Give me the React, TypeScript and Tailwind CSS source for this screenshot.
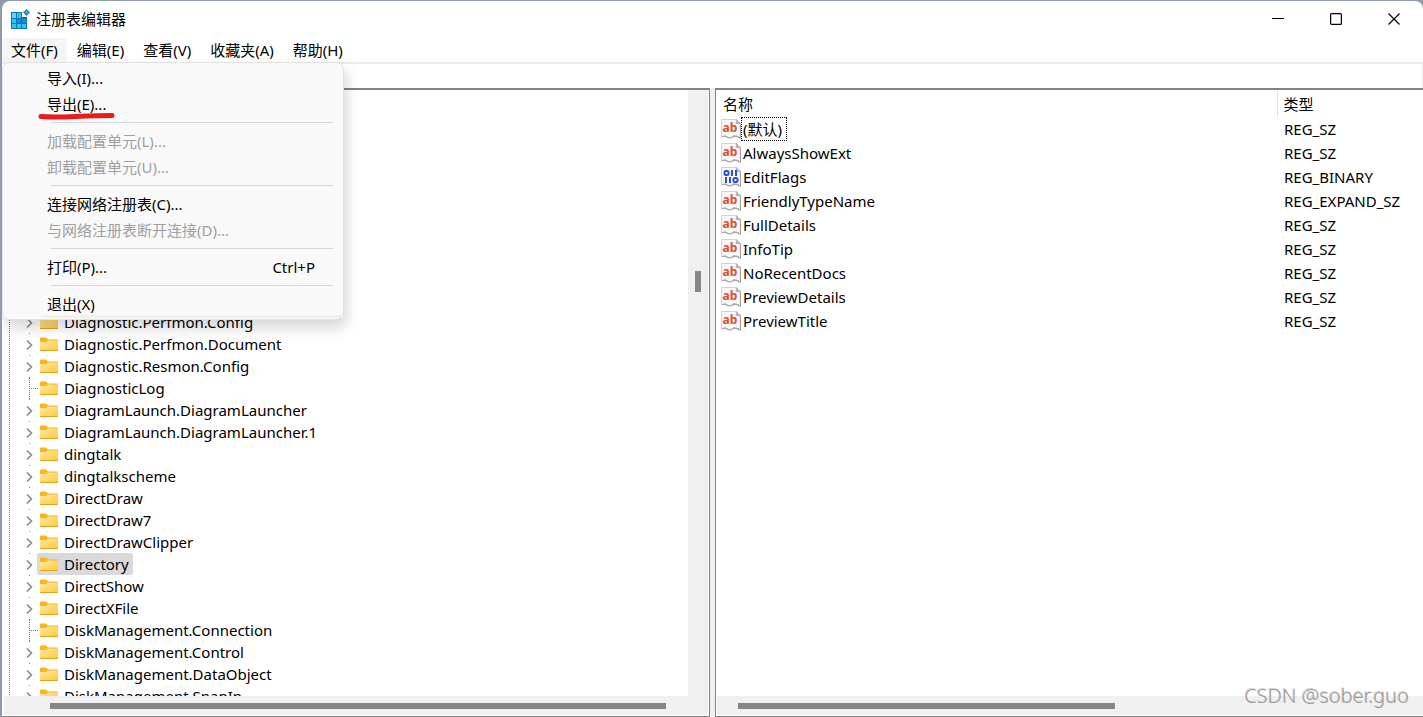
import type { ReactNode } from "react";

const menus = ["文件(F)", "编辑(E)", "查看(V)", "收藏夹(A)", "帮助(H)"];

type MenuEntry = { label: string; shortcut?: string; disabled?: boolean; marked?: boolean; last?: boolean };

const fileMenu: MenuEntry[][] = [
  [{ label: "导入(I)..." }, { label: "导出(E)...", marked: true }],
  [
    { label: "加载配置单元(L)...", disabled: true },
    { label: "卸载配置单元(U)...", disabled: true },
  ],
  [{ label: "连接网络注册表(C)..." }, { label: "与网络注册表断开连接(D)...", disabled: true }],
  [{ label: "打印(P)...", shortcut: "Ctrl+P" }],
  [{ label: "退出(X)", last: true }],
];

const keys: { name: string; leaf?: boolean; selected?: boolean }[] = [
  { name: "Diagnostic.Perfmon.Config" },
  { name: "Diagnostic.Perfmon.Document" },
  { name: "Diagnostic.Resmon.Config" },
  { name: "DiagnosticLog", leaf: true },
  { name: "DiagramLaunch.DiagramLauncher" },
  { name: "DiagramLaunch.DiagramLauncher.1" },
  { name: "dingtalk" },
  { name: "dingtalkscheme" },
  { name: "DirectDraw" },
  { name: "DirectDraw7" },
  { name: "DirectDrawClipper" },
  { name: "Directory", selected: true },
  { name: "DirectShow" },
  { name: "DirectXFile" },
  { name: "DiskManagement.Connection", leaf: true },
  { name: "DiskManagement.Control" },
  { name: "DiskManagement.DataObject" },
  { name: "DiskManagement.SnapIn" },
];

const values = [
  { name: "(默认)", type: "REG_SZ" },
  { name: "AlwaysShowExt", type: "REG_SZ" },
  { name: "EditFlags", type: "REG_BINARY" },
  { name: "FriendlyTypeName", type: "REG_EXPAND_SZ" },
  { name: "FullDetails", type: "REG_SZ" },
  { name: "InfoTip", type: "REG_SZ" },
  { name: "NoRecentDocs", type: "REG_SZ" },
  { name: "PreviewDetails", type: "REG_SZ" },
  { name: "PreviewTitle", type: "REG_SZ" },
];

function RegeditIcon() {
  return (
    <svg width="20" height="20" viewBox="0 0 20 20">
      <rect x="1" y="3" width="16" height="17" fill="#0b77b5" />
      <rect x="2" y="4" width="4" height="5" fill="#5fd4f8" />
      <rect x="7" y="4" width="4" height="5" fill="#35c1f1" />
      <rect x="2" y="10" width="4" height="4" fill="#35c1f1" />
      <rect x="7" y="10" width="4" height="4" fill="#1490cf" />
      <rect x="12" y="10" width="4" height="4" fill="#1490cf" />
      <rect x="2" y="15" width="4" height="4" fill="#35c1f1" />
      <rect x="7" y="15" width="4" height="4" fill="#35c1f1" />
      <rect x="12" y="15" width="4" height="4" fill="#35c1f1" />
      <path d="M12 2h6v6h-6z" fill="#fff" />
      <path d="M16.500 0L20 3.500 16.500 7 13 3.500z" fill="#2b86b5" />
      <path d="M16.500 2L18 3.500 16.500 5 15 3.500z" fill="#43b3df" />
    </svg>
  );
}

function FolderIcon() {
  return (
    <svg width="18" height="15" viewBox="0 0 18 15" className="shrink-0">
      <defs>
        <linearGradient id="folder" x1="0" y1="0" x2="1" y2="1">
          <stop offset="0" stopColor="#ffe9a6" />
          <stop offset="1" stopColor="#ffc83a" />
        </linearGradient>
      </defs>
      <path d="M0 1.500Q0 0.500 1 0.500h5l2 2h9q1 0 1 1V6H0z" fill="#f8b51c" />
      <path d="M0 5h6l2-1.500h10V13.500H0z" fill="url(#folder)" />
      <path d="M0 13h18v0.500q0 0.500-.5.500H.5Q0 14 0 13.500z" fill="#e5a21b" />
    </svg>
  );
}

function ValueIcon({ binary }: { binary: boolean }) {
  return (
    <svg width="20" height="20" viewBox="0 0 20 20" className="shrink-0">
      <path d="M.5.500H15.500L19.500 4.500V19L16 17.500 13 17Q10 20 7.500 18.500L4 17 .5 18z" fill="#f7f7f7" stroke="#d2d2d2" />
      <path d="M15.500.500V4.500H19.500V19L16 17.500" fill="none" stroke="#a0a0a0" strokeWidth="1.200" />
      <path d="M15 0l5 5h-5z" fill="#b5b5b5" />
      <path d="M1 18L4 17Q8 19.500 10.500 18.500L13 17 16 17.500 19 19" fill="none" stroke="#a6a6a6" strokeWidth="1.300" />
      {binary ? (
        <g fill="none" stroke="#2f4fd8" strokeWidth="2">
          <rect x="3.500" y="4" width="4" height="4" rx="1.500" />
          <path d="M11 3v6M15 3v6M5 10v6M9 10v6" />
          <rect x="12.500" y="11" width="4" height="4" rx="1.500" />
        </g>
      ) : (
        <text x="9" y="13" textAnchor="middle" fontSize="12" fontWeight="700" fill="#d94f2b" fontFamily="Open Sans, sans-serif">
          ab
        </text>
      )}
    </svg>
  );
}

function CaptionButton({ label, children }: { label: string; children: ReactNode }) {
  return (
    <button aria-label={label} className="flex h-full w-[58px] items-center justify-center">
      <svg width="12" height="12" viewBox="0 0 12 12" fill="none" stroke="#000" strokeWidth="1.200">
        {children}
      </svg>
    </button>
  );
}

function FileMenu() {
  return (
    <div className="absolute top-[61px] left-0 z-20 w-[342px] rounded-lg border border-[#e2e2e2] bg-[#f9f9f9] pt-[3px] pb-px shadow-[3px_8px_14px_rgba(0,0,0,0.16)]">
      {fileMenu.map((group, i) => (
        <div key={i}>
          {i > 0 && (
            <div className="h-[11px] pt-1 pr-[10px] pl-12">
              <div className="h-px bg-[#d6d6d6]" />
            </div>
          )}
          {group.map((item) => (
            <button
              key={item.label}
              disabled={item.disabled}
              className="relative flex h-[26px] w-full items-center justify-between pr-7 pb-[2px] pl-11 text-black disabled:text-[#a0a0a0]"
            >
              <span>{item.label}</span>
              {item.shortcut && <span>{item.shortcut}</span>}
              {item.marked && (
                <svg width="78" height="8" viewBox="0 0 78 8" className="absolute top-[20px] left-[35px]">
                  <path d="M3 4.500Q14 5.500 38 4.500T74 3.500" fill="none" stroke="#e81c1c" strokeWidth="5" strokeLinecap="round" />
                </svg>
              )}
              {item.last && <span className="absolute right-0 bottom-0 left-10 h-[3px] bg-[#f0f0f0]" />}
            </button>
          ))}
        </div>
      ))}
    </div>
  );
}

function KeyTree() {
  return (
    <div className="flex min-h-0 flex-1">
      <div className="min-w-0 flex-1 overflow-hidden pt-[221px] pl-[5px]">
        <ul className="border-l border-dotted border-[#777] pl-[15px]">
          {keys.map((k) => (
            <li key={k.name} className="flex h-[22px] items-center">
              <span className="relative flex h-full w-3 shrink-0 items-center pt-px">
                {k.leaf ? (
                  <>
                    <span className="absolute inset-y-0 left-1 border-l border-dotted border-[#777]" />
                    <span className="absolute top-1/2 left-1 w-[9px] border-t border-dotted border-[#777]" />
                  </>
                ) : (
                  <>
                    <span className="absolute top-0 left-1 size-px bg-[#888]" />
                    <svg width="8" height="12" viewBox="0 0 8 12" fill="none" stroke="#8a8a8a" strokeWidth="1.600">
                      <path d="M2 1.500L6.500 6 2 10.500" />
                    </svg>
                  </>
                )}
              </span>
              <button
                className={`flex h-full items-center gap-[6px] rounded-[2px] pr-1 pl-[3px] whitespace-nowrap ${
                  k.selected ? "bg-[#d9d9d9]" : ""
                }`}
              >
                <FolderIcon />
                {k.name}
              </button>
            </li>
          ))}
        </ul>
      </div>
      <div className="w-5 bg-[#f0f0f0] pt-[181px]">
        <div className="mx-auto h-[21px] w-[6px] bg-[#868686]" />
      </div>
    </div>
  );
}

function ValueList() {
  return (
    <div className="min-h-0 flex-1 overflow-hidden">
      <table className="w-full table-fixed border-collapse text-left">
        <colgroup>
          <col className="w-[561px]" />
          <col />
        </colgroup>
        <thead>
          <tr className="h-[27px]">
            <th className="border-r border-[#e2e2e2] p-0 pl-[7px] font-normal">名称</th>
            <th className="p-0 pl-[6px] font-normal">类型</th>
          </tr>
        </thead>
        <tbody>
          {values.map((v, i) => (
            <tr key={v.name} className="h-6">
              <td className="p-0 pl-[5px]">
                <div className="flex h-6 items-center">
                  <ValueIcon binary={v.type === "REG_BINARY"} />
                  <span
                    className={`flex h-6 items-center border px-px ${
                      i === 0 ? "border-dotted border-black pr-1" : "border-transparent"
                    }`}
                  >
                    {v.name}
                  </span>
                </div>
              </td>
              <td className="p-0 pl-[7px] whitespace-nowrap">{v.type}</td>
            </tr>
          ))}
        </tbody>
      </table>
    </div>
  );
}

export default function App() {
  return (
    <div className="h-screen bg-[#8f9bac] pt-px pl-[2px] font-['Noto_Sans','Noto_Sans_CJK_SC',sans-serif] text-[15px] leading-5 text-black">
      <div className="relative flex h-full flex-col overflow-hidden rounded-t-lg bg-white">
        <header className="flex h-[37px] shrink-0 items-center pb-[2px] pl-2">
          <RegeditIcon />
          <h1 className="ml-[6px] flex-1">注册表编辑器</h1>
          <CaptionButton label="最小化">
            <path d="M0 5.500h12" />
          </CaptionButton>
          <CaptionButton label="最大化">
            <rect x=".6" y=".6" width="10.800" height="10.800" rx="1" />
          </CaptionButton>
          <CaptionButton label="关闭">
            <path d="M.5.500l11 11M11.500.500l-11 11" />
          </CaptionButton>
        </header>

        <nav className="flex h-6 shrink-0 gap-px">
          {menus.map((m, i) => (
            <button key={m} className={`rounded-t-[3px] px-[9px] ${i === 0 ? "bg-[#f5f5f5]" : ""}`}>
              {m}
            </button>
          ))}
        </nav>

        <input
          aria-label="地址"
          className="h-[26px] shrink-0 border-t-2 border-r border-[#ebebeb] bg-white px-2 outline-none"
        />

        <main className="flex min-h-0 flex-1 bg-[#f0f0f0]">
          <section className="flex w-[708px] flex-col border-t-2 border-r border-b border-[#828287] bg-white pr-px pb-px pl-[2px]">
            <KeyTree />
            <div className="h-[19px] shrink-0 bg-[#f0f0f0] pt-[7px] pr-[42px] pl-[46px]">
              <div className="h-[6px] bg-[#868686]" />
            </div>
          </section>
          <section className="ml-[5px] flex min-w-0 flex-1 flex-col border-t-2 border-b border-l border-[#828287] bg-white pb-px">
            <ValueList />
            <div className="ml-px h-[19px] shrink-0 bg-[#f0f0f0] pt-[7px] pl-[21px]">
              <div className="h-[6px] w-[55%] bg-[#868686]" />
            </div>
          </section>
        </main>

        <FileMenu />
        <div className="absolute right-[14px] bottom-[7px] z-10 text-[20px] leading-7 font-light text-[#999] [text-shadow:-1px_-1px_0_#d4d4d4]">
          CSDN @sober.guo
        </div>
      </div>
    </div>
  );
}
